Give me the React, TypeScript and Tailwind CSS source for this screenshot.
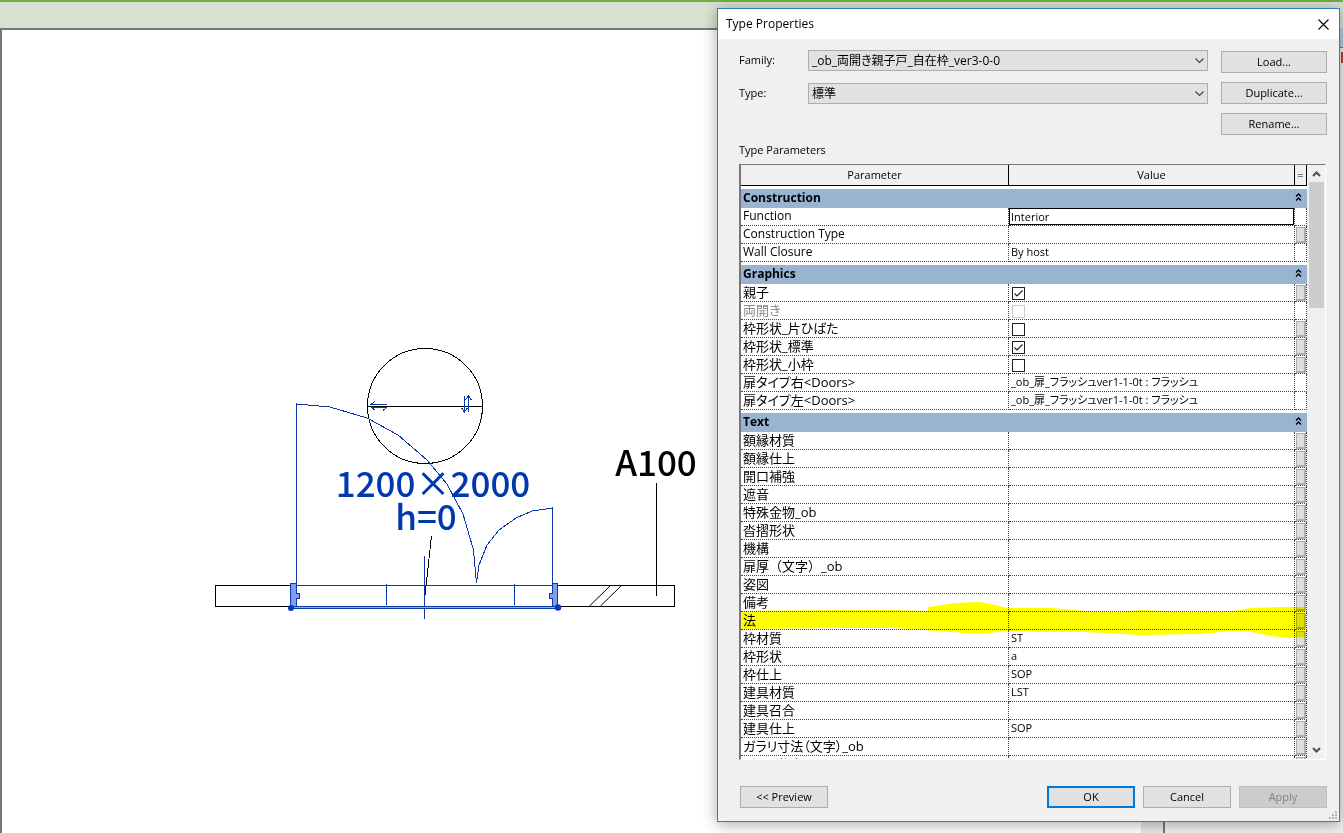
import { useId } from "react";

type Row = {
  name: string;
  value?: string;
  checked?: boolean;
  disabled?: boolean;
  active?: boolean;
  marked?: boolean;
  assoc?: boolean;
};

type Group = { title: string; rows: Row[] };

const GROUPS: Group[] = [
  {
    title: "Construction",
    rows: [
      { name: "Function", value: "Interior", active: true },
      { name: "Construction Type", assoc: true },
      { name: "Wall Closure", value: "By host" },
    ],
  },
  {
    title: "Graphics",
    rows: [
      { name: "親子", checked: true, assoc: true },
      { name: "両開き", checked: false, disabled: true },
      { name: "枠形状_片ひばた", checked: false, assoc: true },
      { name: "枠形状_標準", checked: true, assoc: true },
      { name: "枠形状_小枠", checked: false, assoc: true },
      { name: "扉タイプ右<Doors>", value: "_ob_扉_フラッシュver1-1-0t : フラッシュ" },
      { name: "扉タイプ左<Doors>", value: "_ob_扉_フラッシュver1-1-0t : フラッシュ" },
    ],
  },
  {
    title: "Text",
    rows: [
      { name: "額縁材質", assoc: true },
      { name: "額縁仕上", assoc: true },
      { name: "開口補強", assoc: true },
      { name: "遮音", assoc: true },
      { name: "特殊金物_ob", assoc: true },
      { name: "沓摺形状", assoc: true },
      { name: "機構", assoc: true },
      { name: "扉厚（文字）_ob", assoc: true },
      { name: "姿図", assoc: true },
      { name: "備考", assoc: true },
      { name: "法", assoc: true, marked: true },
      { name: "枠材質", value: "ST", assoc: true },
      { name: "枠形状", value: "a", assoc: true },
      { name: "枠仕上", value: "SOP", assoc: true },
      { name: "建具材質", value: "LST", assoc: true },
      { name: "建具召合", assoc: true },
      { name: "建具仕上", value: "SOP", assoc: true },
      { name: "ガラリ寸法（文字）_ob", assoc: true },
      { name: "ガラリ仕上", assoc: true },
    ],
  },
];

// Names with kana in them are set with proportional kana
function nameClass(name: string) {
  if (/^[\x20-\x7e]*$/.test(name)) return "text-[12px]";
  if (/[\u3040-\u30ff]/.test(name)) return "text-[13px] [font-feature-settings:'palt']";
  return "text-[13px]";
}

function PushButton({ label, className = "" }: { label: string; className?: string }) {
  return (
    <button
      type="button"
      className={`h-[22px] border border-[#adadad] bg-[#e1e1e1] text-[11px] leading-5 ${className}`}
    >
      {label}
    </button>
  );
}

function Dropdown({ label, value }: { label: string; value: string }) {
  const id = useId();
  return (
    <div className="flex items-center">
      <label htmlFor={id} className="w-[69px] shrink-0 text-[11px]">
        {label}
      </label>
      <div className="relative flex-1">
        <select
          id={id}
          className="block h-[21px] w-full appearance-none border border-[#adadad] bg-[#e1e1e1] pl-[3px] text-[12px] leading-[19px] [font-feature-settings:'palt']"
        >
          <option>{value}</option>
        </select>
        <svg
          className="pointer-events-none absolute top-[7px] right-1 h-[7px] w-[9px]"
          viewBox="0 0 9 7"
          fill="none"
          stroke="#444"
          strokeWidth="1.2"
        >
          <path d="M0.5 1.5 L4.5 5.5 L8.5 1.5" />
        </svg>
      </div>
    </div>
  );
}

function TickBox({ row }: { row: Row }) {
  return (
    <span className="relative block size-[13px]">
      <input
        type="checkbox"
        aria-label={row.name}
        defaultChecked={row.checked}
        disabled={row.disabled}
        className="block size-[13px] appearance-none border border-[#222] bg-white disabled:border-[#ccc]"
      />
      {row.checked && (
        <svg
          className="pointer-events-none absolute inset-0"
          viewBox="0 0 13 13"
          fill="none"
          stroke="#222"
          strokeWidth="1.2"
        >
          <path d="M2.5 6.5 L5 9 L10.5 3.5" />
        </svg>
      )}
    </span>
  );
}

/* Highlighter stroke across one row */
function Marker() {
  return (
    <svg
      className="pointer-events-none absolute -top-3 left-0 h-10 w-[564px] mix-blend-multiply"
      viewBox="0 0 564 40"
      fill="#ffff00"
    >
      <path d="M0 11 L95 10 L155 10 L187 11 L187 7 L215 3 L238 2 L250 4 L266 8 L310 8 L345 11 L375 12 L400 10 L450 12 L492 11 L510 8 L540 7 L564 7 L564 37 L548 38 L530 36 L505 31 L490 31 L460 34 L400 35 L345 32 L300 32 L265 31 L250 33 L235 34 L210 32 L170 29 L150 28 L95 28 L0 29 Z" />
    </svg>
  );
}

function ParameterRow({ row }: { row: Row }) {
  return (
    <tr className="h-[18px]">
      <td
        className={`relative h-[18px] border-r border-b border-dotted border-[#444] p-0 pl-[2px] align-top leading-4 whitespace-nowrap ${nameClass(row.name)} ${
          row.disabled ? "text-[#888]" : ""
        }`}
      >
        {row.name}
        {row.marked && <Marker />}
      </td>
      <td className="h-[18px] border-r border-b border-dotted border-[#444] p-0 align-top text-[11px] leading-4 whitespace-nowrap [font-feature-settings:'palt']">
        {row.checked !== undefined ? (
          <div className="flex h-[17px] items-end pb-[1px] pl-[3px]">
            <TickBox row={row} />
          </div>
        ) : row.active ? (
          <input
            type="text"
            aria-label={row.name}
            defaultValue={row.value}
            className="block h-[17px] w-full border border-black bg-white pl-[1px] text-[11px] outline-none"
          />
        ) : (
          <span className="block h-[17px] pl-[2px]">{row.value}</span>
        )}
      </td>
      <td className="h-[18px] border-r border-b border-dotted border-[#444] p-0">
        {row.assoc && (
          <button
            type="button"
            aria-label={`Associate ${row.name}`}
            className="ml-[1px] block h-4 w-[10px] border border-r-2 border-b-2 border-[#acacac] bg-[#dedede]"
          />
        )}
      </td>
    </tr>
  );
}

function ParameterTable() {
  return (
    <table className="w-full table-fixed border-separate border-spacing-0">
      <colgroup>
        <col className="w-[268px]" />
        <col />
        <col className="w-3" />
      </colgroup>
      <thead>
        <tr className="h-[21px] bg-[#f0f0f0] text-[11px]">
          <th className="border-r border-b border-black p-0 leading-5 font-normal">Parameter</th>
          <th className="border-r border-b border-black p-0 leading-5 font-normal">Value</th>
          <th className="border-r border-b border-black p-0 leading-5 font-normal">=</th>
        </tr>
      </thead>
      {GROUPS.map((group) => (
        <tbody key={group.title}>
          <tr>
            <th
              colSpan={3}
              className="h-[22px] border-t-[3px] border-white bg-[#99b4d1] bg-clip-padding p-0 text-left text-[12px] leading-[18px]"
            >
              <div className="flex h-[19px] items-start justify-between pr-[5px] pl-[2px]">
                {group.title}
                <button type="button" aria-label={`Collapse ${group.title}`} className="pt-1">
                  <svg className="block h-2 w-[7px]" viewBox="0 0 7 8" fill="none" stroke="#000" strokeWidth="1.4">
                    <path d="M1 3.5 L3.5 1 L6 3.5 M1 7.5 L3.5 5 L6 7.5" />
                  </svg>
                </button>
              </div>
            </th>
          </tr>
          {group.rows.map((row) => (
            <ParameterRow key={row.name} row={row} />
          ))}
        </tbody>
      ))}
    </table>
  );
}

function ScrollBar() {
  return (
    <div className="mr-[1px] ml-[2px] flex w-[15px] shrink-0 flex-col bg-[#f0f0f0]">
      <svg className="h-[17px] w-[15px]" viewBox="0 0 15 17" fill="none" stroke="#505050" strokeWidth="2">
        <path d="M4 11 L7.5 7.5 L11 11" />
      </svg>
      <div className="h-[126px] bg-[#cdcdcd]" />
      <svg className="mt-auto h-[17px] w-[15px]" viewBox="0 0 15 17" fill="none" stroke="#505050" strokeWidth="2">
        <path d="M4 6 L7.5 9.5 L11 6" />
      </svg>
    </div>
  );
}

/* Plan view of the door, drawn in sheet coordinates */
function DoorPlan() {
  return (
    <svg className="block h-[640px] w-[700px]" viewBox="2 30 700 640" fill="none">
      <g stroke="#000" shapeRendering="crispEdges">
        <circle cx="425" cy="406" r="57.5" />
        <path d="M368 406.5 H482" />
        <path d="M291 585.5 H215.5 V606.5 H291" />
        <path d="M558 585.5 H674.5 V606.5 H558" />
        <path d="M656.5 483 V596" />
        <path d="M431.5 536 L425 595" />
      </g>
      <path d="M589.5 606 L610.5 585.5 M600.5 606 L621.5 585.5" stroke="#000" />
      <g stroke="#0b3aa8" shapeRendering="crispEdges">
        <path d="M296.5 585 V404 L330 407 L367 418 L398 435 L427 460 L447 484 L463 514 L473.5 550 L476.5 583 L479 565 L487 545 L499 530 L516 518 L532 511 L552.5 508 V585" />
        <path d="M296 585.5 H553 M386.5 584 V605 M514.5 584 V605 M424.5 556 V619" />
        <rect x="290.5" y="606.5" width="267" height="2" fill="#8faaf0" />
        <path d="M290.5 583.5 H296.5 V593.5 H299.5 V598.5 H296.5 V606.5 H290.5 Z" fill="#7f9de8" />
        <path d="M557.5 583.5 H552.5 V593.5 H549.5 V598.5 H552.5 V606.5 H557.5 Z" fill="#7f9de8" />
        <path d="M387 404.5 H371 L375 401.5 M371 407.5 H387 M383 410.5 L387 407.5 M375 410 L371 407.5" />
        <path d="M464.5 396 V412 L461.5 408 M464.5 412 L467.5 408 M468.5 412 V396 L465.5 400 M468.5 396 L471.5 400" />
      </g>
      <circle cx="291" cy="608" r="3" fill="#0038b8" />
      <circle cx="558" cy="607.5" r="3.2" fill="#0038b8" />
      <g className="font-['Noto_Sans_CJK_JP',sans-serif] text-[35px] font-medium" textAnchor="middle">
        <text x="433" y="497" fill="#0038b0">
          1200×2000
        </text>
        <text x="426" y="530" fill="#0038b0">
          h=0
        </text>
        <text x="656" y="476" fill="#000">
          A100
        </text>
      </g>
    </svg>
  );
}

function TypeProperties() {
  return (
    <section
      role="dialog"
      aria-labelledby="dialog-title"
      className="absolute top-2 right-[3px] bottom-[11px] flex w-[623px] flex-col border border-[#2a7fc0] bg-[#f0f0f0] shadow-[0_2px_14px_rgba(0,0,0,0.35)]"
    >
      <header className="flex h-[30px] shrink-0 items-center justify-between bg-white pr-[10px] pl-2">
        <h1 id="dialog-title" className="text-[12px]">
          Type Properties
        </h1>
        <button type="button" aria-label="Close">
          <svg className="block size-[11px]" viewBox="0 0 11 11" fill="none" stroke="#000" strokeWidth="1.1">
            <path d="M0.5 0.5 L10.5 10.5 M10.5 0.5 L0.5 10.5" />
          </svg>
        </button>
      </header>

      <div className="flex min-h-0 flex-1 flex-col pt-[11px] pr-[12px] pb-[13px] pl-[21px]">
        <div className="flex gap-[13px]">
          <div className="flex flex-1 flex-col gap-3">
            <Dropdown label="Family:" value="_ob_両開き親子戸_自在枠_ver3-0-0" />
            <Dropdown label="Type:" value="標準" />
          </div>
          <div className="flex w-[106px] flex-col gap-[9px] pt-[1px]">
            <PushButton label="Load..." />
            <PushButton label="Duplicate..." />
            <PushButton label="Rename..." />
          </div>
        </div>

        <h2 className="mt-[7px] text-[11px] leading-4">Type Parameters</h2>

        <div className="mt-[6px] mr-[1px] flex min-h-0 flex-1 border-t border-r border-b border-l-2 border-t-[#777] border-r-white border-b-white border-l-[#777]">
          <div className="min-w-0 flex-1 overflow-hidden bg-white">
            <ParameterTable />
          </div>
          <ScrollBar />
        </div>

        <footer className="mt-[26px] flex gap-2">
          <PushButton label="<< Preview" className="mr-auto ml-[1px] w-[88px]" />
          <button
            type="button"
            className="h-[22px] w-[88px] border-2 border-[#0078d7] bg-[#e1e1e1] text-[11px] leading-[18px]"
          >
            OK
          </button>
          <PushButton label="Cancel" className="w-[88px]" />
          <button
            type="button"
            disabled
            className="h-[22px] w-[88px] border border-[#bfbfbf] bg-[#cccccc] text-[11px] leading-5 text-[#838383]"
          >
            Apply
          </button>
        </footer>
      </div>

      <svg className="absolute right-[2px] bottom-[2px] size-2" viewBox="0 0 8 8" fill="#b5b5b5">
        <path d="M6 0h2v2h-2z M3 3h2v2h-2z M6 3h2v2h-2z M0 6h2v2h-2z M3 6h2v2h-2z M6 6h2v2h-2z" />
      </svg>
    </section>
  );
}

export default function App() {
  return (
    <div className="relative flex h-screen min-h-[700px] flex-col overflow-hidden bg-[#d8e2d0] font-['Open_Sans','Noto_Sans_CJK_JP',sans-serif] text-black">
      <div className="h-7 shrink-0 border-t-2 border-[#70ad47]" />
      <div className="flex min-h-0 flex-1">
        <main className="min-w-0 flex-1 overflow-hidden border-t-2 border-l-2 border-[#777] bg-white">
          <DoorPlan />
        </main>
        <div className="w-[22px] bg-[#e6e6e6]" />
        <aside className="flex w-[180px] flex-col border-l-2 border-[#777] bg-[#f0f0f0]">
          <div className="h-5 border-b border-[#777] bg-[#b8c8dc]" />
          <div className="mt-1 ml-auto h-[11px] w-[2px] bg-[#b5482a]" />
        </aside>
      </div>
      <TypeProperties />
    </div>
  );
}
